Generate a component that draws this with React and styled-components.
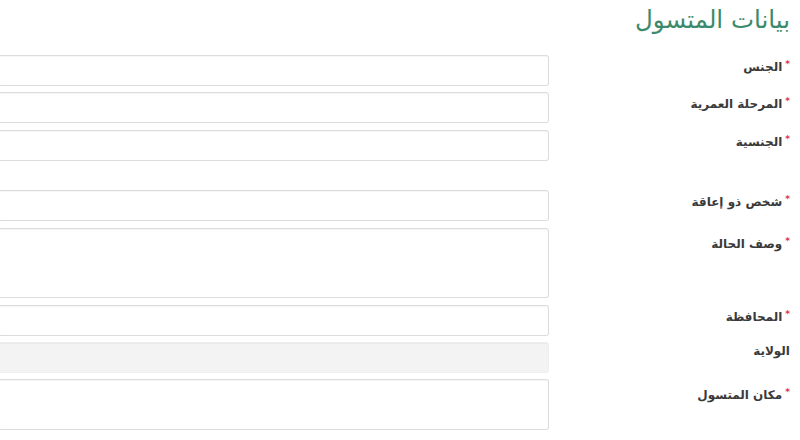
import styled, { createGlobalStyle } from "styled-components";

const GlobalStyle = createGlobalStyle`
  html, body {
    margin: 0;
    padding: 0;
    background: #fff;
    overflow: hidden;
  }
  body {
    direction: rtl;
    font-family: "DejaVu Sans", "Noto Sans", sans-serif;
  }
`;

const Page = styled.div`
  width: 800px;
  height: 440px;
  padding-right: 10px;
  box-sizing: border-box;
`;

const Title = styled.h2`
  margin: 0;
  padding-top: 5px;
  height: 55px;
  box-sizing: border-box;
  font-size: 24.5px;
  line-height: 30px;
  font-weight: 400;
  color: #3b8a6c;
`;

const Form = styled.div`
  display: flex;
  flex-direction: column;
`;

const Row = styled.div`
  display: grid;
  grid-template-columns: 230px 1fr;
  column-gap: 11px;
  margin-top: ${(p) => p.$gapTop}px;
`;

const Label = styled.label`
  padding-top: ${(p) => (p.$tall ? 4 : 0)}px;
  font-size: 12px;
  line-height: 18px;
  font-weight: 700;
  color: #3a3a3a;
  white-space: nowrap;
`;

const Star = styled.span`
  color: #e2334b;
  font-size: 9px;
  vertical-align: 4px;
  margin-left: 3px;
`;

const Input = styled.div`
  height: ${(p) => p.$h || 31}px;
  box-sizing: border-box;
  border: 1px solid ${(p) => (p.$disabled ? "#efefef" : "#dcdcdc")};
  border-left: 0;
  border-radius: 0 3px 3px 0;
  background: ${(p) => (p.$disabled ? "#f3f3f3" : "#fff")};
  box-shadow: inset 0 1px 1px rgba(0, 0, 0, 0.04);
`;

const fields = [
  { label: "الجنس", required: true, gap: 0 },
  { label: "المرحلة العمرية", required: true, gap: 6 },
  { label: "الجنسية", required: true, gap: 7 },
  { label: "شخص ذو إعاقة", required: true, gap: 29 },
  { label: "وصف الحالة", required: true, h: 70, tall: true, gap: 7 },
  { label: "المحافظة", required: true, gap: 7 },
  { label: "الولاية", disabled: true, gap: 6 },
  { label: "مكان المتسول", required: true, h: 51, tall: true, gap: 6 },
];

export default function App() {
  return (
    <>
      <GlobalStyle />
      <Page>
        <Title>بيانات المتسول</Title>
        <Form>
          {fields.map((f, i) => (
            <Row key={i} $gapTop={f.gap}>
              <Label $tall={f.tall}>
                {f.required && <Star>*</Star>}
                {f.label}
              </Label>
              <Input $h={f.h} $disabled={f.disabled} />
            </Row>
          ))}
        </Form>
      </Page>
    </>
  );
}
